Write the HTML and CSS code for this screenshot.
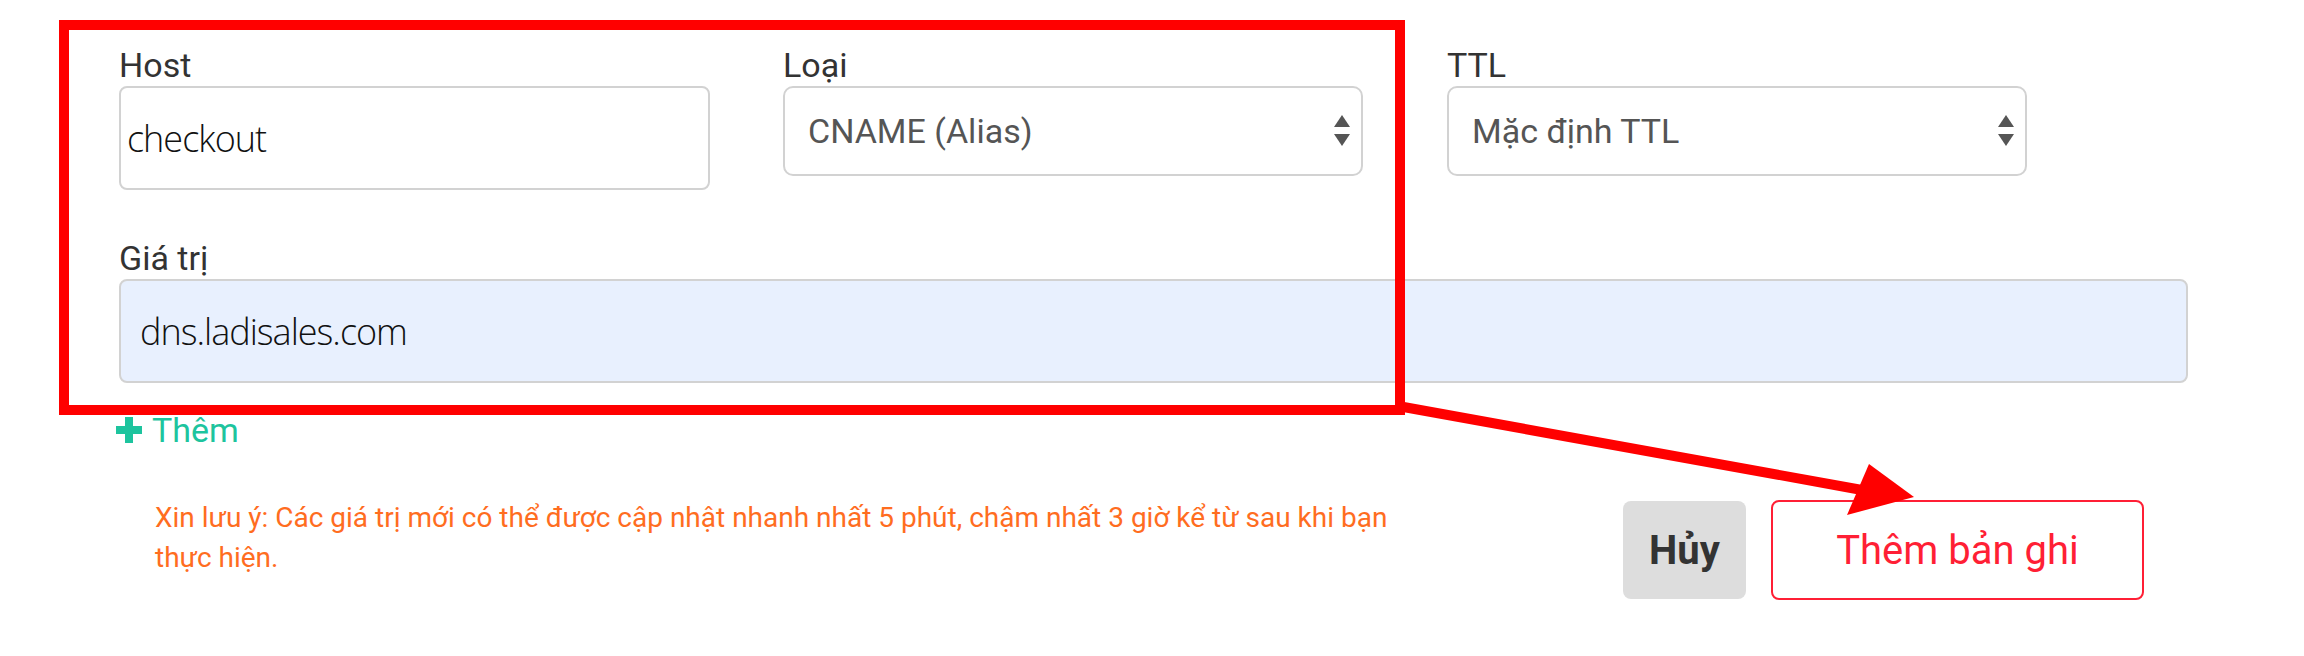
FILE: index.html
```html
<!DOCTYPE html>
<html lang="vi">
<head>
    <meta charset="UTF-8">
    <meta name="viewport" content="width=device-width, initial-scale=1.0">
    <title>Thêm bản ghi DNS</title>
    <link rel="stylesheet" href="styles.css">
</head>
<body>
    <div class="record-form">
        <!-- annotation overlay -->
        <div class="highlight-box"></div>
        <svg class="annotation-arrow" width="2304" height="656" viewBox="0 0 2304 656">
            <line x1="1398" y1="406" x2="1862" y2="490" stroke="#ff0000" stroke-width="10" />
            <polygon points="1869,464 1914,497 1847,515" fill="#ff0000" />
        </svg>

        <div class="field-row">
            <div class="form-group">
                <label>Host</label>
                <input type="text" class="text-input host-input" value="checkout" readonly>
            </div>
            <div class="form-group">
                <label>Loại</label>
                <div class="select-box">
                    <span>CNAME (Alias)</span>
                    <svg class="select-arrows" width="18" height="32" viewBox="0 0 18 32">
                        <polygon points="9,0 17,12 1,12" />
                        <polygon points="1,19 17,19 9,31" />
                    </svg>
                </div>
            </div>
            <div class="form-group">
                <label>TTL</label>
                <div class="select-box">
                    <span>Mặc định TTL</span>
                    <svg class="select-arrows" width="18" height="32" viewBox="0 0 18 32">
                        <polygon points="9,0 17,12 1,12" />
                        <polygon points="1,19 17,19 9,31" />
                    </svg>
                </div>
            </div>
        </div>

        <div class="form-group value-group">
            <label>Giá trị</label>
            <input type="text" class="text-input value-input" value="dns.ladisales.com" readonly>
        </div>

        <a class="add-link">
            <svg width="26" height="26" viewBox="0 0 26 26">
                <rect x="9" y="0" width="8" height="26" />
                <rect x="0" y="9" width="26" height="8" />
            </svg>
            Thêm
        </a>

        <div class="form-footer">
            <p class="note">Xin lưu ý: Các giá trị mới có thể được cập nhật nhanh nhất 5 phút, chậm nhất 3 giờ kể từ sau khi bạn thực hiện.</p>
            <div class="actions">
                <button class="btn-cancel">Hủy</button>
                <button class="btn-submit">Thêm bản ghi</button>
            </div>
        </div>
    </div>
</body>
</html>
```
FILE: styles.css
```css
body {
    margin: 0;
    background-color: #fff;
    font-family: Roboto, "Liberation Sans", Arial, sans-serif;
}

.record-form {
    position: relative;
    width: 2069px;
    height: 656px;
    padding: 45px 0 0 119px;
    box-sizing: border-box;
    width: 2304px;
    overflow: hidden;
}

.highlight-box {
    position: absolute;
    left: 59px;
    top: 20px;
    width: 1346px;
    height: 395px;
    border: 10px solid #ff0000;
    box-sizing: border-box;
    z-index: 2;
}

.annotation-arrow {
    position: absolute;
    left: 0;
    top: 0;
    z-index: 2;
    pointer-events: none;
}

.field-row {
    display: grid;
    grid-template-columns: 664px 664px 580px;
    align-items: start;
}

.form-group label {
    display: block;
    font-size: 34px;
    line-height: 40px;
    color: #333;
    margin-bottom: 1px;
}

.text-input {
    display: block;
    box-sizing: border-box;
    height: 104px;
    border: 2px solid #d2d2d2;
    border-radius: 8px;
    font-family: "Open Sans", sans-serif;
    font-size: 36px;
    font-weight: 300;
    letter-spacing: -1px;
    color: #111;
    outline: none;
}

.host-input {
    width: 591px;
    padding: 0 6px;
    background-color: #fff;
}

.select-box {
    display: flex;
    align-items: center;
    justify-content: space-between;
    box-sizing: border-box;
    width: 580px;
    height: 90px;
    padding: 0 10px 0 23px;
    border: 2px solid #d2d2d2;
    border-radius: 10px;
    font-size: 34px;
    color: #555;
}

.select-arrows {
    fill: #555;
}

.value-group {
    margin-top: 48px;
}

.value-input {
    width: 2069px;
    padding: 0 19px;
    background-color: #e8f0fe;
}

.add-link {
    display: flex;
    align-items: center;
    gap: 10px;
    margin-top: 27px;
    margin-left: -3px;
    font-size: 34px;
    line-height: 40px;
    color: #1dc49e;
}

.add-link svg {
    fill: #1dc49e;
}

.form-footer {
    display: flex;
    justify-content: space-between;
    align-items: flex-start;
    width: 2069px;
    margin-top: 48px;
}

.note {
    margin: 0 0 0 36px;
    width: 1275px;
    font-size: 28px;
    line-height: 40px;
    color: #ff6d1f;
}

.actions {
    display: flex;
    align-items: center;
    gap: 25px;
    margin-right: 44px;
    margin-top: 2px;
}

.btn-cancel {
    width: 123px;
    height: 98px;
    border: none;
    border-radius: 8px;
    background-color: #dddddd;
    font-family: Roboto, sans-serif;
    font-size: 40px;
    font-weight: bold;
    color: #333;
}

.btn-submit {
    width: 373px;
    height: 100px;
    border: 2px solid #ff1f35;
    border-radius: 8px;
    background-color: #fff;
    font-family: Roboto, sans-serif;
    font-size: 40px;
    color: #ff1f35;
}
```
